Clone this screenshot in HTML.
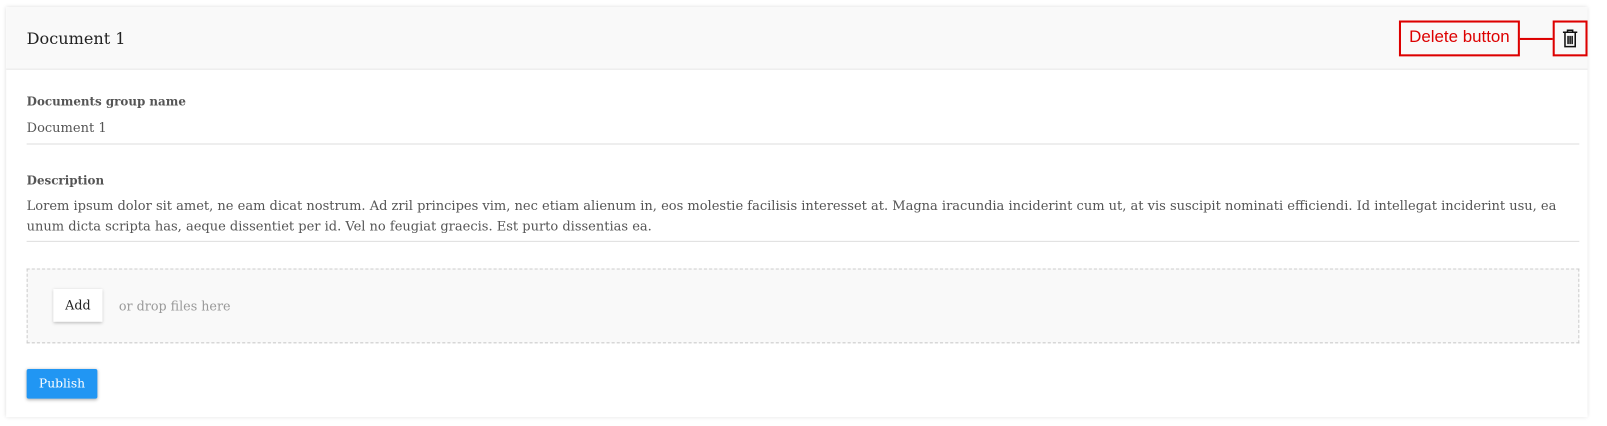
<!DOCTYPE html>
<html><head><style>
body{margin:0;width:1607px;height:426px;background:#fff;font-family:"DejaVu Serif","Liberation Serif",serif;overflow:hidden}
#w{position:absolute;left:0;top:0;width:1568px;height:416px;transform:scale(1.02487);transform-origin:0 0}
.card{position:absolute;left:6px;top:7px;width:1543px;height:400px;background:#fff;box-shadow:0 0 4px rgba(0,0,0,.15)}
.hdr{height:60px;background:#f9f9f9;border-bottom:1px solid #e8e8e8}
.title{position:absolute;left:20px;top:21px;font-size:15.7px;color:#222}
.lbl{position:absolute;left:20px;font-size:11.6px;font-weight:bold;color:#555}
.val{position:absolute;left:20px;font-size:12.7px;color:#555;line-height:20px}
.line{position:absolute;left:20px;width:1515px;height:1px;background:#ddd}
.drop{position:absolute;left:20px;top:255px;width:1513px;height:71px;border:1px dashed #ccc;background:#f9f9f9}
.add{position:absolute;left:25px;top:19px;width:48px;height:32px;background:#fff;box-shadow:0 1px 3px rgba(0,0,0,.25);font-size:12.4px;line-height:32px;text-align:center;color:#222}
.or{position:absolute;left:89px;top:28px;font-size:12.4px;color:#999}
.pub{position:absolute;left:20px;top:353px;width:69px;height:29px;background:#2196f3;color:#fff;font-size:12px;line-height:29px;text-align:center;border-radius:2px;box-shadow:0 1px 3px rgba(0,0,0,.3)}
.red{position:absolute;border:2px solid #d00;box-sizing:border-box}
</style></head><body><div id="w">
<div class="card">
<div class="hdr"></div>
<div class="title">Document 1</div>
<div class="lbl" style="top:85px">Documents group name</div>
<div class="val" style="top:108px">Document 1</div>
<div class="line" style="top:133px"></div>
<div class="lbl" style="top:162px">Description</div>
<div class="val" style="top:184px;width:1530px;white-space:nowrap">Lorem ipsum dolor sit amet, ne eam dicat nostrum. Ad zril principes vim, nec etiam alienum in, eos molestie facilisis interesset at. Magna iracundia inciderint cum ut, at vis suscipit nominati efficiendi. Id intellegat inciderint usu, ea<br>unum dicta scripta has, aeque dissentiet per id. Vel no feugiat graecis. Est purto dissentias ea.</div>
<div class="line" style="top:228px"></div>
<div class="drop"><div class="add">Add</div><div class="or">or drop files here</div></div>
<div class="pub">Publish</div>
</div>
<div class="red" style="left:1365px;top:20px;width:118px;height:35px"></div>
<div style="position:absolute;left:1365px;top:27px;width:118px;text-align:center;font-family:'Liberation Sans',sans-serif;font-size:16.5px;color:#d00">Delete button</div>
<div style="position:absolute;left:1483px;top:37px;width:32px;height:2px;background:#d00"></div>
<div class="red" style="left:1515px;top:20px;width:34px;height:35px"></div>
<svg style="position:absolute;left:1523px;top:28px" width="18" height="20" viewBox="0 0 18 20"><path d="M6.5 3V1.5h5V3M2 3.5h14M4 4v13.5h10V4M7 7v8M9 7v8M11 7v8" stroke="#111" stroke-width="1.5" fill="none"/></svg>
</div></body></html>
